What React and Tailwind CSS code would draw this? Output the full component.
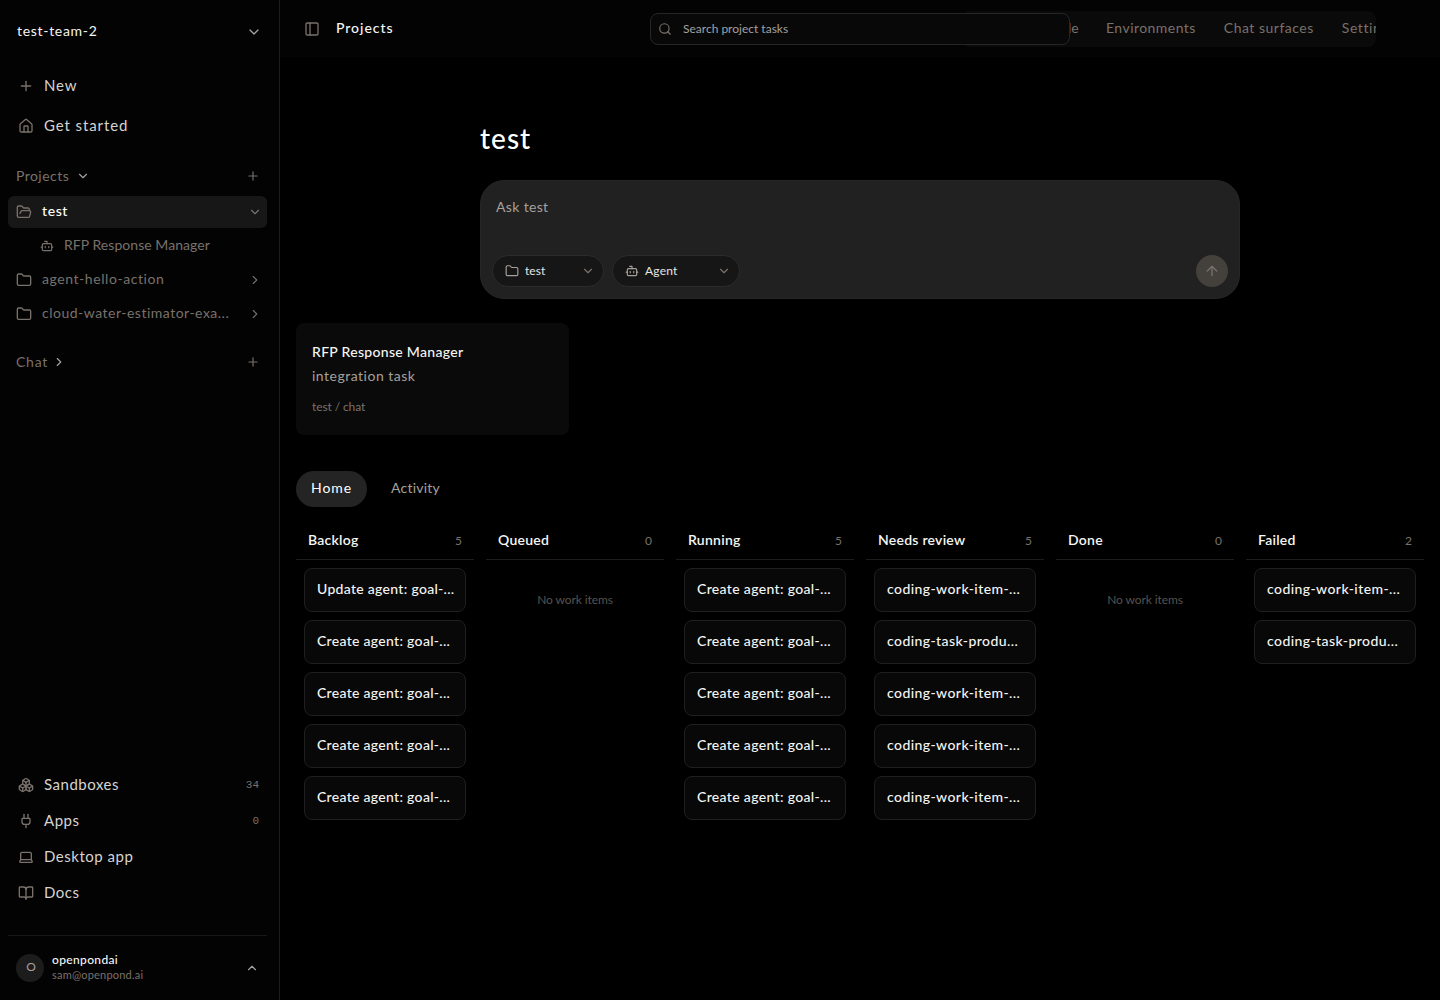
import React, { useState } from "react";
import {
  ArrowUp, BookOpen, Bot, Boxes, ChevronDown, ChevronRight, ChevronUp, Folder,
  FolderOpen, House, Laptop, PanelLeft, Plug, Plus, Search,
} from "lucide-react";

const FOOTER_LINKS = [
  { label: "Sandboxes", icon: Boxes, count: 34 },
  { label: "Apps", icon: Plug, count: 0 },
  { label: "Desktop app", icon: Laptop },
  { label: "Docs", icon: BookOpen },
];

const COLUMNS = [
  {
    name: "Backlog",
    count: 5,
    track: "tracking-[0.3px]",
    items: ["Update agent: goal-...", "Create agent: goal-...", "Create agent: goal-...", "Create agent: goal-...", "Create agent: goal-..."],
  },
  { name: "Queued", count: 0, items: [] },
  {
    name: "Running",
    count: 5,
    track: "tracking-[0.34px]",
    items: ["Create agent: goal-...", "Create agent: goal-...", "Create agent: goal-...", "Create agent: goal-...", "Create agent: goal-..."],
  },
  {
    name: "Needs review",
    count: 5,
    track: "tracking-[0.42px]",
    items: ["coding-work-item-...", "coding-task-produ...", "coding-work-item-...", "coding-work-item-...", "coding-work-item-..."],
  },
  { name: "Done", count: 0, items: [] },
  { name: "Failed", count: 2, track: "tracking-[0.42px]", items: ["coding-work-item-...", "coding-task-produ..."] },
];

function Sidebar() {
  return (
    <aside className="flex w-[280px] shrink-0 flex-col border-r border-[#1c1c1c] bg-[#030303] pl-2 pr-3 text-[#79716b]">
      <div className="flex h-16 items-center justify-between pl-[9px] pr-[5px]">
        <span className="pb-0.5 text-sm tracking-[0.7px] text-[#f5f5f4]">test-team-2</span>
        <ChevronDown size={16} className="text-[#a6a09b]" />
      </div>

      <nav className="mt-0.5 text-[#d6d3d1]">
        <div className="flex h-10 items-center gap-2.5 pl-2.5">
          <Plus size={16} className="text-[#79716b]" />
          <span className="pb-0.5 text-[15px] tracking-[0.8px]">New</span>
        </div>
        <div className="flex h-10 items-center gap-2.5 pl-2.5">
          <House size={16} className="text-[#79716b]" />
          <span className="pb-0.5 text-[15px] tracking-[0.9px]">Get started</span>
        </div>
      </nav>

      <div className="mt-[14px] flex h-8 items-center pl-2 pr-[7px] text-sm">
        <span className="tracking-[0.45px]">Projects</span>
        <ChevronDown size={14} className="ml-[7px] text-[#a6a09b]" />
        <Plus size={14} className="ml-auto" />
      </div>
      <div className="mt-1 flex h-8 items-center rounded-md bg-[#171717] pl-2 pr-[5px] text-sm">
        <FolderOpen size={16} />
        <span className="ml-2.5 pb-0.5 font-medium tracking-[0.6px] text-white">test</span>
        <ChevronDown size={14} className="ml-auto" />
      </div>
      <div className="mt-0.5 flex h-8 items-center pl-8 text-sm">
        <Bot size={14} />
        <span className="ml-2.5 pb-0.5 tracking-[0.05px]">RFP Response Manager</span>
      </div>
      <div className="mt-0.5 flex h-8 items-center pl-2 pr-[5px] text-sm">
        <Folder size={16} />
        <span className="ml-2.5 pb-0.5 tracking-[0.57px]">agent-hello-action</span>
        <ChevronRight size={14} className="ml-auto" />
      </div>
      <div className="mt-0.5 flex h-8 items-center pl-2 pr-[5px] text-sm">
        <Folder size={16} />
        <span className="ml-2.5 pb-0.5 tracking-[0.5px]">cloud-water-estimator-exa...</span>
        <ChevronRight size={14} className="ml-auto" />
      </div>
      <div className="mt-4 flex h-8 items-center pl-2 pr-[7px] text-sm">
        <span className="tracking-[0.75px]">Chat</span>
        <ChevronRight size={14} className="ml-1 text-[#a6a09b]" />
        <Plus size={14} className="ml-auto" />
      </div>

      <div className="mt-auto mb-6">
        {FOOTER_LINKS.map(({ label, icon: Icon, count }) => (
          <div key={label} className="flex h-9 items-center pl-2.5 pr-2">
            <Icon size={16} />
            <span className="ml-2.5 pb-0.5 text-[15px] tracking-[0.52px] text-[#d6d3d1]">{label}</span>
            {count !== undefined && (
              <span className="ml-auto font-['Liberation_Mono',monospace] text-[11px]">{count}</span>
            )}
          </div>
        ))}
      </div>

      <div className="flex h-[65px] items-center border-t border-[#171717] pl-2 pr-2">
        <div className="flex size-7 items-center justify-center rounded-full bg-[#1c1c1c] text-xs text-[#a6a09b]">
          <span className="ml-0.5 pb-0.5">O</span>
        </div>
        <div className="ml-2 pb-0.5">
          <div className="text-xs leading-4 font-medium tracking-[0.35px] text-[#f5f5f4]">openpondai</div>
          <div className="text-[11px] leading-[14px] tracking-[0.2px]">sam@openpond.ai</div>
        </div>
        <ChevronUp size={14} className="ml-auto text-[#a6a09b]" />
      </div>
    </aside>
  );
}

function Header() {
  return (
    <header className="relative flex h-[57px] shrink-0 items-center bg-[#030303] pl-6 pr-16">
      <PanelLeft size={16} className="text-[#79716b]" />
      <span className="ml-4 pb-0.5 text-sm font-medium tracking-[0.95px] text-[#f5f5f4]">Projects</span>
      <div className="ml-auto flex h-9 w-[414px] items-center gap-7 overflow-hidden rounded-lg bg-[#0a0a0a] pb-0.5 pl-[106px] text-sm whitespace-nowrap text-[#79716b]">
        <span className="w-[10px]">le</span>
        <span className="tracking-[0.45px]">Environments</span>
        <span className="tracking-[0.5px]">Chat surfaces</span>
        <span className="tracking-[0.6px]">Settings</span>
      </div>
      {/* Search floats over the tab strip */}
      <div className="absolute top-[13px] left-[370px] flex h-8 w-[420px] items-center rounded-lg border border-[#262626] bg-[#080808] pl-[7px]">
        <Search size={14} className="text-[#79716b]" />
        <span className="ml-[11px] text-xs text-[#a1a1a1]">Search project tasks</span>
      </div>
    </header>
  );
}

function Composer() {
  return (
    <section className="mx-auto w-[760px] pt-[60px]">
      <h1 className="text-[28px] leading-[42px] font-medium tracking-[1px] text-white">test</h1>
      <div className="mt-[21px] flex h-[119px] flex-col justify-between rounded-3xl border border-[#262626] bg-[#212121] px-[11px] pt-[15px] pb-[11px]">
        <div className="pl-1 text-sm leading-[22px] tracking-[0.35px] text-[#a6a09b]">Ask test</div>
        <div className="flex items-center gap-2 text-xs text-[#e7e5e4]">
          <div className="flex h-8 w-28 items-center rounded-full border border-[#2b2b2b] bg-[#161616] pl-3 pr-2">
            <Folder size={14} className="text-[#a6a09b]" />
            <span className="ml-1.5 tracking-[0.1px]">test</span>
            <ChevronDown size={14} className="ml-auto text-[#79716b]" />
          </div>
          <div className="flex h-8 w-32 items-center rounded-full border border-[#2b2b2b] bg-[#161616] pl-3 pr-2">
            <Bot size={14} className="text-[#a6a09b]" />
            <span className="ml-1.5 tracking-[0.2px]">Agent</span>
            <ChevronDown size={14} className="ml-auto text-[#79716b]" />
          </div>
          <button className="ml-auto flex size-8 items-center justify-center rounded-full bg-[#44403b] text-[#79716b]">
            <ArrowUp size={16} />
          </button>
        </div>
      </div>
    </section>
  );
}

function Board() {
  return (
    <div className="mt-4 grid grid-cols-6 gap-3">
      {COLUMNS.map((col) => (
        <div key={col.name}>
          <div className="flex h-[37px] items-center justify-between border-b border-[#1c1c1c] px-3">
            <span className="pb-0.5 text-sm font-semibold tracking-[0.25px] text-[#f5f5f4]">{col.name}</span>
            <span className="text-xs text-[#79716b]">{col.count}</span>
          </div>
          {col.items.length === 0 ? (
            <p className="pt-[31px] text-center text-xs leading-[18px] tracking-[-0.1px] text-[#57534d]">No work items</p>
          ) : (
            <div className={`flex flex-col gap-2 p-2 ${col.track}`}>
              {col.items.map((item, i) => (
                <div key={i} className="flex h-11 items-center rounded-lg border border-[#1f1f1f] bg-[#080808] px-3 pb-0.5 text-sm font-medium whitespace-nowrap text-[#f5f5f4]">
                  {item}
                </div>
              ))}
            </div>
          )}
        </div>
      ))}
    </div>
  );
}

export default function App() {
  const [tab, setTab] = useState("Home");

  return (
    <div className="flex h-[1000px] w-[1440px] overflow-hidden bg-black font-[Lato,sans-serif]">
      <Sidebar />
      <main className="flex min-w-0 flex-1 flex-col">
        <Header />
        <Composer />
        <div className="px-4 pt-6">
          <div className="h-28 w-[273px] rounded-lg bg-[#0a0a0a] px-4 pt-[19px]">
            <div className="text-sm leading-5 font-medium tracking-[0.3px] text-[#f5f5f4]">RFP Response Manager</div>
            <div className="mt-1 text-sm leading-5 tracking-[0.5px] text-[#a6a09b]">integration task</div>
            <div className="mt-[13px] text-xs leading-4 tracking-[-0.1px] text-[#79716b]">test / chat</div>
          </div>
          <div className="mt-9 flex h-9 gap-2 text-sm">
            {["Home", "Activity"].map((t) => (
              <button
                key={t}
                onClick={() => setTab(t)}
                className={t === tab ? "w-[71px] rounded-full bg-[#242424] pb-0.5 tracking-[0.9px] text-white" : "w-[81px] rounded-full pb-0.5 tracking-[0.25px] text-[#a6a09b]"}
              >
                {t}
              </button>
            ))}
          </div>
          <Board />
        </div>
      </main>
    </div>
  );
}
